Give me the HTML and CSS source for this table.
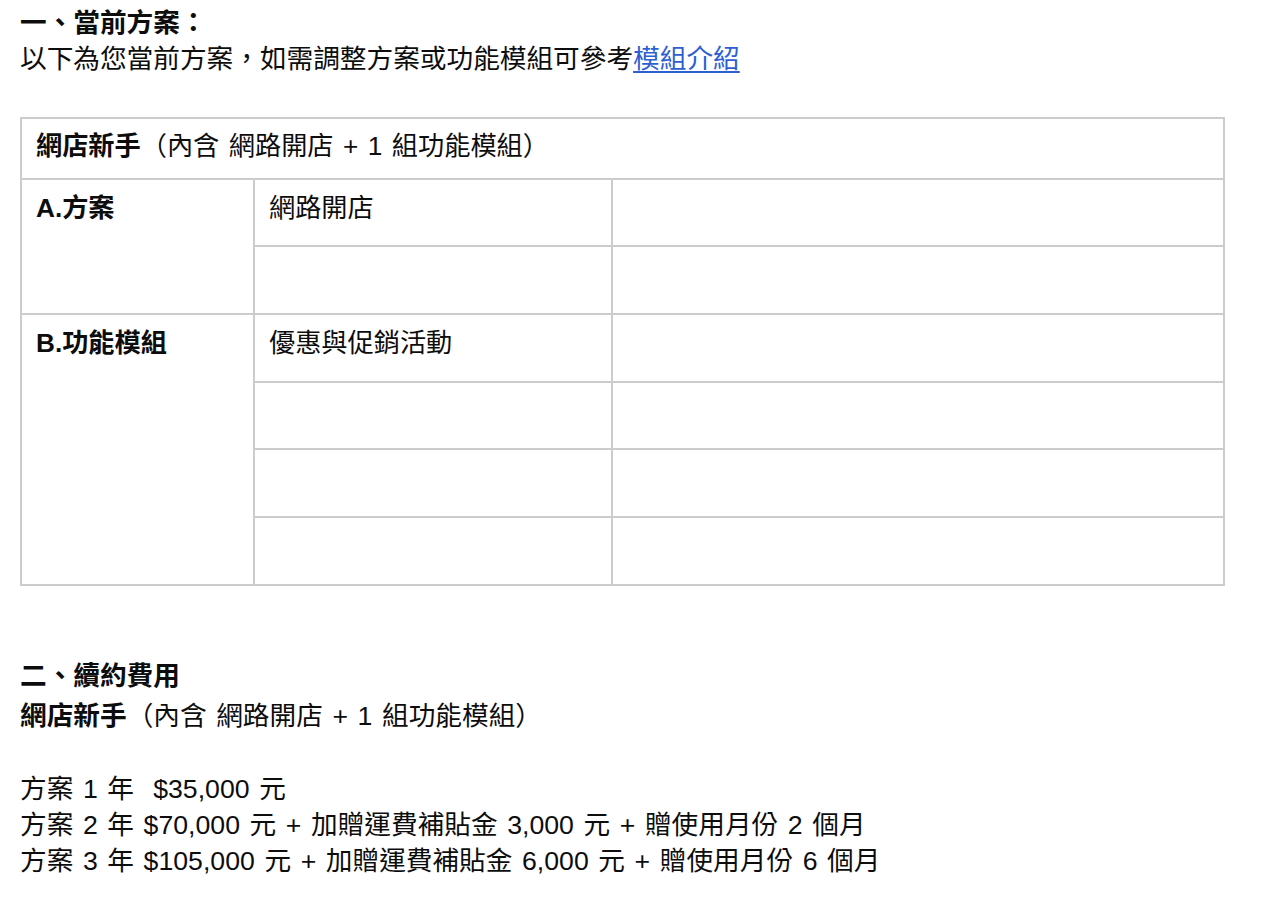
FILE: index.html
```html
<!DOCTYPE html>
<html lang="zh-Hant">
<head>
<meta charset="utf-8">
<title>當前方案</title>
<link rel="stylesheet" href="styles.css">
</head>
<body>
<main class="page">
  <section class="current">
    <h2 class="sec-title">一、當前方案：</h2>
    <p class="intro">以下為您當前方案，如需調整方案或功能模組可參考<a class="link" href="#">模組介紹</a></p>
    <table class="plan">
      <colgroup>
        <col class="c1">
        <col class="c2">
        <col class="c3">
      </colgroup>
      <tr class="r-head">
        <td class="head" colspan="3"><strong>網店新手</strong>（內含 網路開店 + 1 組功能模組）</td>
      </tr>
      <tr class="r-a">
        <td class="label" rowspan="2">A.方案</td>
        <td>網路開店</td>
        <td></td>
      </tr>
      <tr class="r-b">
        <td></td>
        <td></td>
      </tr>
      <tr class="r-b">
        <td class="label" rowspan="4">B.功能模組</td>
        <td>優惠與促銷活動</td>
        <td></td>
      </tr>
      <tr class="r-a">
        <td></td>
        <td></td>
      </tr>
      <tr class="r-b">
        <td></td>
        <td></td>
      </tr>
      <tr class="r-b">
        <td></td>
        <td></td>
      </tr>
    </table>
  </section>

  <section class="renew">
    <h2 class="sec-title">二、續約費用</h2>
    <p class="sub"><strong>網店新手</strong>（內含 網路開店 + 1 組功能模組）</p>
    <div class="prices">
      <p class="price">方案 1 年&nbsp; $35,000 元</p>
      <p class="price">方案 2 年 $70,000 元 + 加贈運費補貼金 3,000 元 + 贈使用月份 2 個月</p>
      <p class="price">方案 3 年 $105,000 元 + 加贈運費補貼金 6,000 元 + 贈使用月份 6 個月</p>
    </div>
  </section>
</main>
</body>
</html>
```

FILE: styles.css
```css
html, body {
  margin: 0;
  padding: 0;
  background: #ffffff;
}

body {
  font-family: "Liberation Sans", "Noto Sans CJK TC", sans-serif;
  font-size: 26.67px;
  color: #0d0d0d;
  word-spacing: 2.2px;
}

.page {
  padding: 5px 20px 0 20px;
}

.sec-title {
  margin: 0;
  font-size: 26.67px;
  font-weight: 700;
  line-height: 36px;
}

.intro {
  margin: 0;
  line-height: 36px;
}

.link {
  color: #2d5fd2;
  text-decoration: underline;
  text-underline-offset: 3px;
}

.plan {
  margin-top: 40px;
  width: 1203px;
  border-collapse: collapse;
  table-layout: fixed;
  font-size: 26.2px;
}

.c1 { width: 233px; }
.c2 { width: 358px; }
.c3 { width: 612px; }

.plan td {
  border: 2px solid #cccccc;
  padding: 10px 14px 0 14px;
  line-height: 36px;
  vertical-align: top;
}

.plan td.head {
  padding-top: 9px;
}

.plan td.label {
  font-weight: 700;
}

.r-head { height: 61px; }
.r-a { height: 67px; }
.r-b { height: 68px; }

.renew {
  margin-top: 72px;
}

.sub {
  margin: 4px 0 0 0;
  line-height: 36px;
}

.prices {
  margin-top: 37px;
}

.price {
  margin: 0;
  line-height: 36px;
}
```
